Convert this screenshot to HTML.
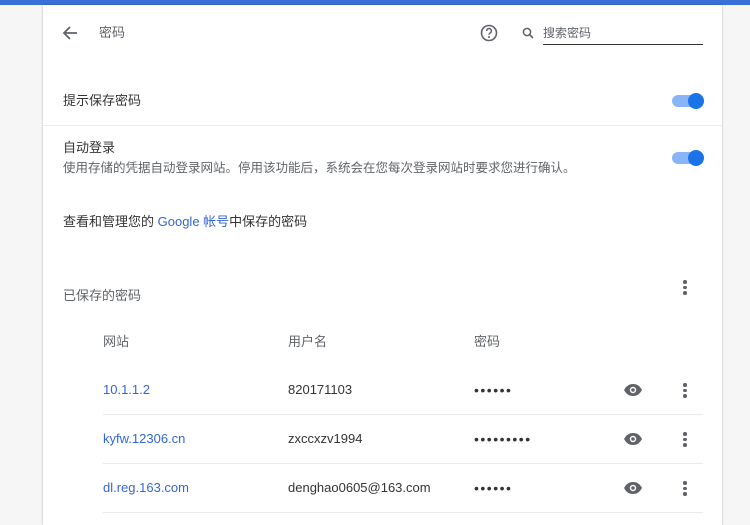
<!DOCTYPE html><html><head><meta charset="utf-8"><style>
body{margin:0;width:750px;height:520px;background:#f6f6f6;font-family:"Liberation Sans","Noto Sans CJK SC",sans-serif;font-size:13px;color:#333;position:relative;overflow:hidden}
.top{position:absolute;left:0;top:0;width:750px;height:5px;background:#3b6fd8}
.card{position:absolute;left:43px;top:5px;width:679px;height:520px;background:#fff;box-shadow:0 0 2px rgba(0,0,0,.3)}
.t{position:absolute;white-space:nowrap;line-height:16px}
.sec{color:#5f6368}
.link{color:#3367d6}
.tg{position:absolute;width:28px;height:12px;border-radius:6px;background:#8ab4f8}
.tg:after{content:"";position:absolute;right:-4px;top:-2px;width:16px;height:16px;border-radius:50%;background:#1a73e8}
.hr{position:absolute;height:1px;background:#ebebeb}
.kb{position:absolute;width:4px}
.kb i{display:block;width:3.5px;height:3.5px;border-radius:50%;background:#5f6368;margin-bottom:2px}
.pw{letter-spacing:1.5px;font-size:14px}
</style></head><body>
<div class="top"></div>
<div class="card"></div>
<svg style="position:absolute;left:62px;top:25px" width="16" height="16" viewBox="0 0 16 16"><path d="M15 8H2M8 2L2 8l6 6" stroke="#5f6368" stroke-width="1.8" fill="none"/></svg>
<div class="t sec" style="left:99px;top:25px">密码</div>
<svg style="position:absolute;left:480px;top:24px" width="18" height="18" viewBox="0 0 18 18"><circle cx="9" cy="9" r="7.5" stroke="#5f6368" stroke-width="1.6" fill="none"/><path d="M6.6 7a2.4 2.4 0 1 1 3.4 2.1c-.7.4-1 .8-1 1.6" stroke="#5f6368" stroke-width="1.5" fill="none"/><circle cx="9" cy="13" r="1" fill="#5f6368"/></svg>
<svg style="position:absolute;left:522px;top:27px" width="12" height="12" viewBox="0 0 12 12"><circle cx="5" cy="5" r="3.6" stroke="#5f6368" stroke-width="1.5" fill="none"/><path d="M7.5 7.5L11 11" stroke="#5f6368" stroke-width="1.6"/></svg>
<div class="t sec" style="left:543px;top:25px;font-size:12px">搜索密码</div>
<div style="position:absolute;left:543px;top:44px;width:160px;height:1px;background:#333"></div>
<div class="t" style="left:63px;top:93px">提示保存密码</div>
<div class="tg" style="left:672px;top:95px"></div>
<div class="hr" style="left:43px;top:125px;width:679px"></div>
<div class="t" style="left:63px;top:140px">自动登录</div>
<div class="t sec" style="left:63px;top:160px;font-size:12.5px">使用存储的凭据自动登录网站。停用该功能后，系统会在您每次登录网站时要求您进行确认。</div>
<div class="tg" style="left:672px;top:152px"></div>
<div class="t" style="left:63px;top:214px">查看和管理您的 <span class="link">Google 帐号</span>中保存的密码</div>
<div class="t sec" style="left:63px;top:288px">已保存的密码</div>
<div class="kb" style="left:683px;top:280px"><i></i><i></i><i></i></div>
<div class="t sec" style="left:103px;top:334px">网站</div>
<div class="t sec" style="left:288px;top:334px">用户名</div>
<div class="t sec" style="left:474px;top:334px">密码</div>

<div class="t link" style="left:103px;top:382px">10.1.1.2</div>
<div class="t" style="left:288px;top:382px">820171103</div>
<div class="t pw" style="left:474px;top:382px">••••••</div>
<div class="hr" style="left:103px;top:414px;width:600px"></div>
<div class="t link" style="left:103px;top:431px">kyfw.12306.cn</div>
<div class="t" style="left:288px;top:431px">zxccxzv1994</div>
<div class="t pw" style="left:474px;top:431px">•••••••••</div>
<div class="hr" style="left:103px;top:463px;width:600px"></div>
<div class="t link" style="left:103px;top:480px">dl.reg.163.com</div>
<div class="t" style="left:288px;top:480px">denghao0605@163.com</div>
<div class="t pw" style="left:474px;top:480px">••••••</div>
<div class="hr" style="left:103px;top:512px;width:600px"></div>

<svg style="position:absolute;left:623px;top:383px" width="20" height="14" viewBox="0 0 20 14"><path d="M1 7C3.5 2.5 6.5 1 10 1s6.5 1.5 9 6c-2.5 4.5-5.5 6-9 6S3.5 11.5 1 7z" fill="#5f6368"/><circle cx="10" cy="7" r="3.2" fill="#fff"/><circle cx="10" cy="7" r="1.8" fill="#5f6368"/></svg>
<svg style="position:absolute;left:623px;top:432px" width="20" height="14" viewBox="0 0 20 14"><path d="M1 7C3.5 2.5 6.5 1 10 1s6.5 1.5 9 6c-2.5 4.5-5.5 6-9 6S3.5 11.5 1 7z" fill="#5f6368"/><circle cx="10" cy="7" r="3.2" fill="#fff"/><circle cx="10" cy="7" r="1.8" fill="#5f6368"/></svg>
<svg style="position:absolute;left:623px;top:481px" width="20" height="14" viewBox="0 0 20 14"><path d="M1 7C3.5 2.5 6.5 1 10 1s6.5 1.5 9 6c-2.5 4.5-5.5 6-9 6S3.5 11.5 1 7z" fill="#5f6368"/><circle cx="10" cy="7" r="3.2" fill="#fff"/><circle cx="10" cy="7" r="1.8" fill="#5f6368"/></svg>
<div class="kb" style="left:683px;top:383px"><i></i><i></i><i></i></div>
<div class="kb" style="left:683px;top:432px"><i></i><i></i><i></i></div>
<div class="kb" style="left:683px;top:481px"><i></i><i></i><i></i></div>
</body></html>
